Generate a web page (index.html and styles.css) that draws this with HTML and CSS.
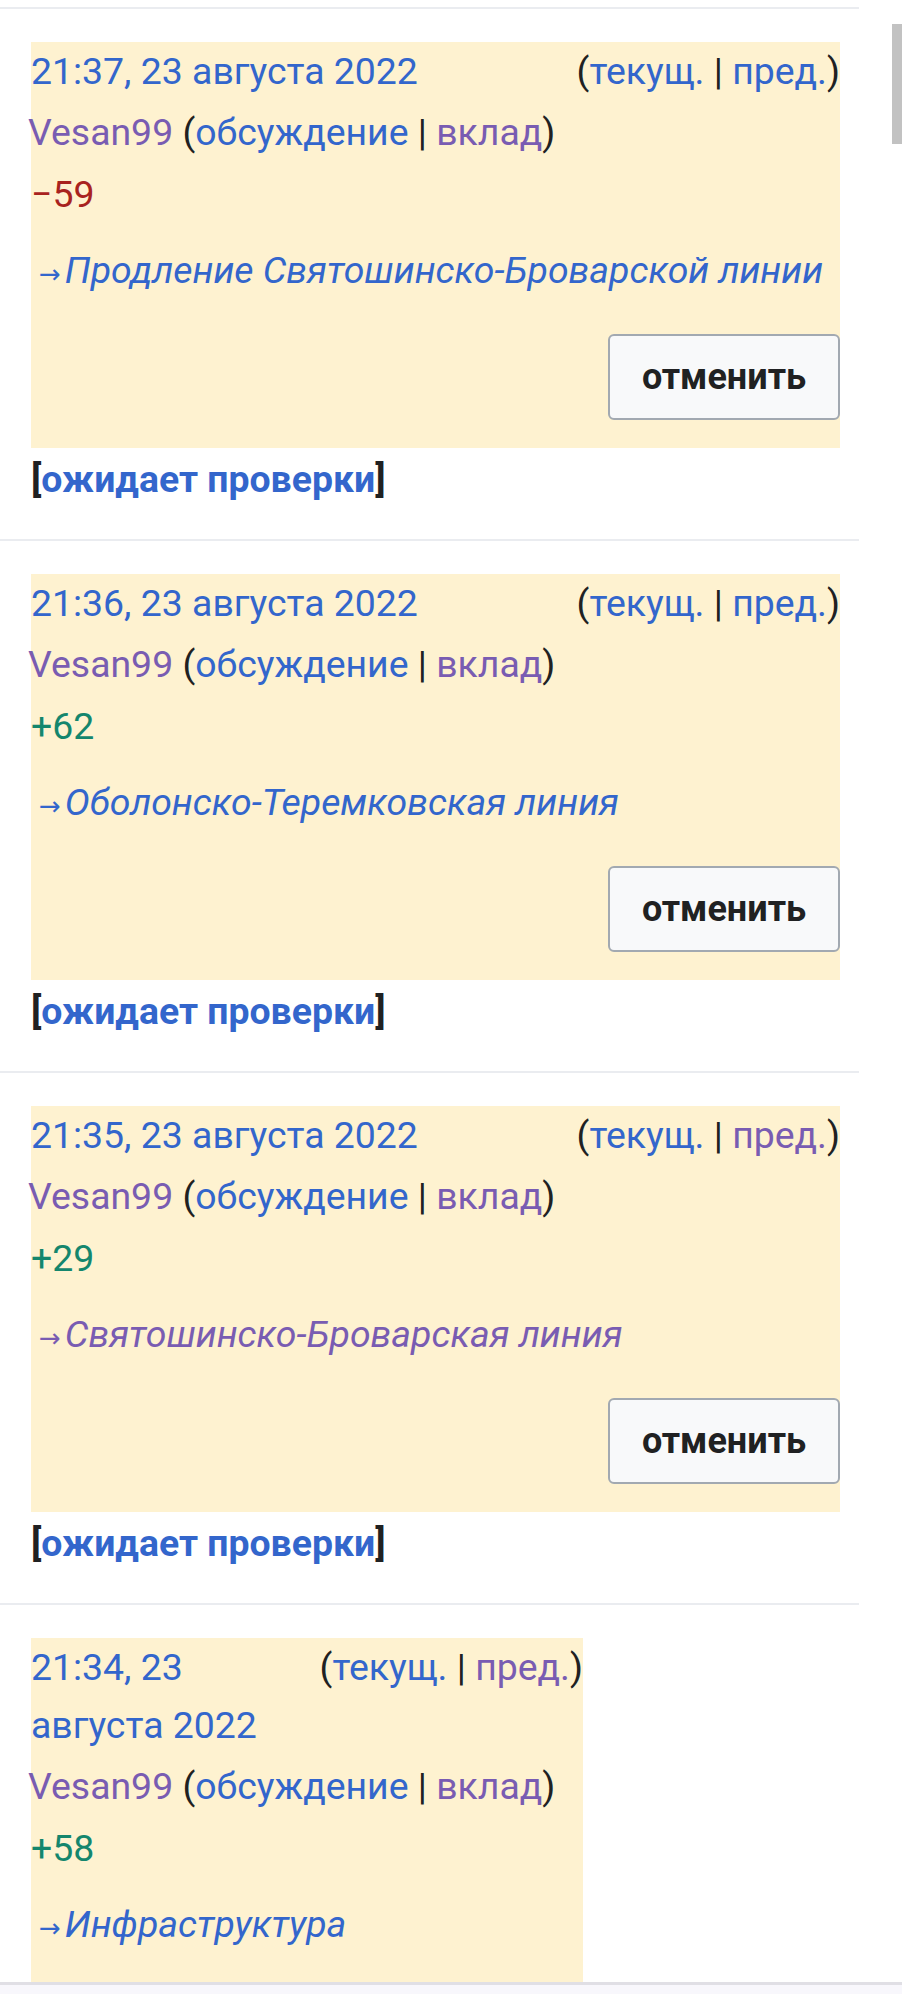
FILE: index.html
```html
<!DOCTYPE html>
<html lang="ru">
<head>
<meta charset="utf-8">
<title>История изменений</title>
<link rel="stylesheet" href="styles.css">
</head>
<body>
<div class="screen">
  <div class="viewport">
    <ul class="history">
      <li class="entry">
        <div class="entry-box">
          <div class="entry-head">
            <a class="link date">21:37, 23 августа 2022</a>
            <span class="diff-links">(<a class="link">текущ.</a> | <a class="link">пред.</a>)</span>
          </div>
          <div class="entry-user"><a class="link visited">Vesan99</a> (<a class="link">обсуждение</a> | <a class="link visited">вклад</a>)</div>
          <div class="entry-size neg">−59</div>
          <div class="entry-summary"><a class="link"><span class="arrow">→</span><span class="summary-text">Продление Святошинско-Броварской линии</span></a></div>
          <div class="entry-actions"><button class="undo" type="button">отменить</button></div>
        </div>
        <div class="entry-status">[<a class="link">ожидает проверки</a>]</div>
      </li>
      <li class="entry">
        <div class="entry-box">
          <div class="entry-head">
            <a class="link date">21:36, 23 августа 2022</a>
            <span class="diff-links">(<a class="link">текущ.</a> | <a class="link">пред.</a>)</span>
          </div>
          <div class="entry-user"><a class="link visited">Vesan99</a> (<a class="link">обсуждение</a> | <a class="link visited">вклад</a>)</div>
          <div class="entry-size pos">+62</div>
          <div class="entry-summary"><a class="link"><span class="arrow">→</span><span class="summary-text">Оболонско-Теремковская линия</span></a></div>
          <div class="entry-actions"><button class="undo" type="button">отменить</button></div>
        </div>
        <div class="entry-status">[<a class="link">ожидает проверки</a>]</div>
      </li>
      <li class="entry">
        <div class="entry-box">
          <div class="entry-head">
            <a class="link date">21:35, 23 августа 2022</a>
            <span class="diff-links">(<a class="link">текущ.</a> | <a class="link visited">пред.</a>)</span>
          </div>
          <div class="entry-user"><a class="link visited">Vesan99</a> (<a class="link">обсуждение</a> | <a class="link visited">вклад</a>)</div>
          <div class="entry-size pos">+29</div>
          <div class="entry-summary"><a class="link visited"><span class="arrow">→</span><span class="summary-text">Святошинско-Броварская линия</span></a></div>
          <div class="entry-actions"><button class="undo" type="button">отменить</button></div>
        </div>
        <div class="entry-status">[<a class="link">ожидает проверки</a>]</div>
      </li>
      <li class="entry">
        <div class="entry-box entry-box--compact">
          <div class="entry-head">
            <a class="link date">21:34, 23 августа 2022</a>
            <span class="diff-links">(<a class="link">текущ.</a> | <a class="link visited">пред.</a>)</span>
          </div>
          <div class="entry-user"><a class="link visited">Vesan99</a> (<a class="link">обсуждение</a> | <a class="link visited">вклад</a>)</div>
          <div class="entry-size pos">+58</div>
          <div class="entry-summary"><a class="link"><span class="arrow">→</span><span class="summary-text">Инфраструктура</span></a></div>
        </div>
      </li>
    </ul>
    <div class="scrollbar"></div>
  </div>
  <div class="navbar"></div>
</div>
</body>
</html>
```
FILE: styles.css
```css
* { box-sizing: border-box; }

html, body {
  margin: 0;
  padding: 0;
  background: #ffffff;
}

body {
  font-family: Roboto, "Noto Sans", "Liberation Sans", sans-serif;
  font-size: 37.4px;
  color: #202122;
}

.screen {
  height: 1994px;
  display: flex;
  flex-direction: column;
  overflow: hidden;
}

.viewport {
  position: relative;
  flex: 1;
  overflow: hidden;
}

.history {
  list-style: none;
  margin: 7px 0 0;
  padding: 0;
  width: 859px;
}

.entry {
  border-top: 2px solid #eaecf0;
  padding: 33px 19px 29px 31px;
}

.entry-box {
  background: #fef2d0;
  padding-bottom: 28px;
}

.entry-box--compact {
  width: 552px;
}

.link {
  color: #3366cc;
  text-decoration: none;
}

.link.visited {
  color: #795cb2;
}

.entry-head {
  display: flex;
  justify-content: space-between;
  gap: 16px;
  line-height: 58px;
}

.diff-links {
  white-space: nowrap;
  flex-shrink: 0;
}

.entry-user {
  margin-top: 1px;
  margin-left: -3px;
  line-height: 62px;
}

.entry-size {
  line-height: 62px;
}

.entry-size.neg { color: #a8231e; }
.entry-size.pos { color: #14866d; }

.entry-summary {
  margin-top: 14px;
  line-height: 62px;
}

.arrow {
  font-family: "DejaVu Sans", sans-serif;
  font-size: 26px;
  line-height: 1;
  margin-left: 8px;
  margin-right: 4px;
}

.summary-text {
  font-style: italic;
}

.entry-actions {
  display: flex;
  justify-content: flex-end;
  margin-top: 33px;
}

.undo {
  width: 232px;
  height: 86px;
  padding: 0;
  border: 2px solid #a2a9b1;
  border-radius: 6px;
  background: #f8f9fa;
  color: #202122;
  font-family: Roboto, "Noto Sans", "Liberation Sans", sans-serif;
  font-size: 36px;
  font-weight: 700;
}

.entry-status {
  line-height: 62px;
  font-weight: 700;
}

.scrollbar {
  position: absolute;
  top: 24px;
  right: 0;
  width: 10px;
  height: 120px;
  background: #c2c2c2;
}

.navbar {
  height: 12px;
  border-top: 3px solid #e0dfe5;
  background: #f8f7fc;
}
```
